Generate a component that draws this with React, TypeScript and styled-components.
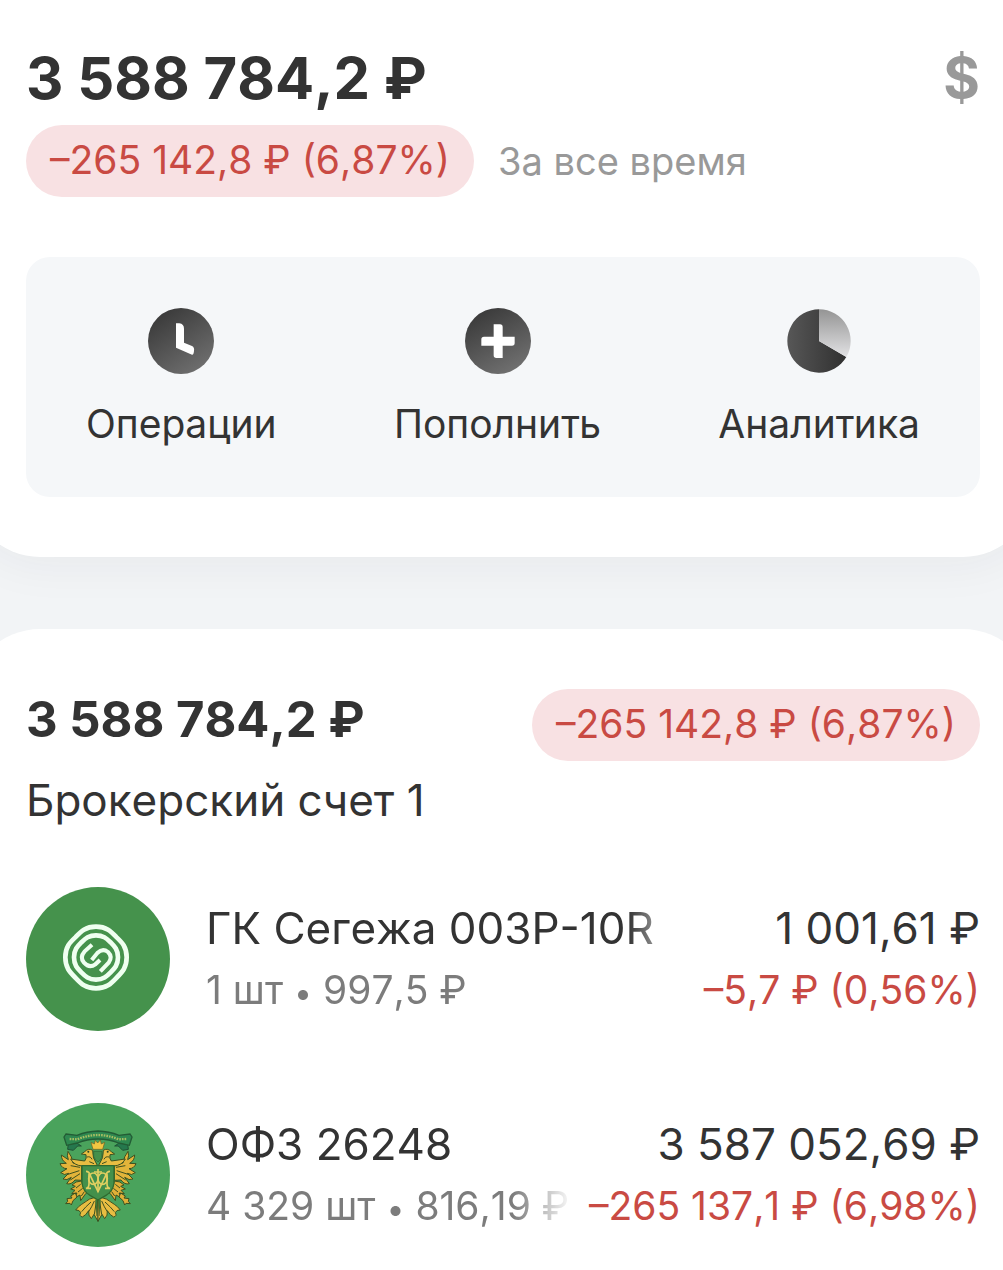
import * as React from "react";
import styled, { createGlobalStyle } from "styled-components";

type TAction = {
  key: string;
  label: string;
  icon: React.ReactNode;
};

type TPosition = {
  name: string;
  amount: string;
  price: string;
  total: string;
  change: string;
  logo: React.ReactNode;
};

const ClockIcon = () => (
  <Icon viewBox="0 0 198 198" aria-hidden="true">
    <defs>
      <linearGradient id="clock-fill" x1="0.2" y1="0.1" x2="0.8" y2="1">
        <stop offset="0" stopColor="#3c3c3c" />
        <stop offset="1" stopColor="#717171" />
      </linearGradient>
    </defs>
    <circle cx="99" cy="99" r="99" fill="url(#clock-fill)" />
    <path
      d="M84 46H94Q108 48 108 62V104L132 114Q140 118 138 129Q137 141 132 140L84 119Z"
      fill="#fff"
    />
  </Icon>
);

const PlusIcon = () => (
  <Icon viewBox="0 0 198 198" aria-hidden="true">
    <defs>
      <linearGradient id="plus-fill" x1="0.2" y1="0.1" x2="0.7" y2="1">
        <stop offset="0" stopColor="#3c3c3c" />
        <stop offset="1" stopColor="#717171" />
      </linearGradient>
    </defs>
    <circle cx="99" cy="99" r="99" fill="url(#plus-fill)" />
    <path
      d="M86 49H105Q113 49 113 57V86H149V105Q149 113 141 113H113V150H94Q86 150 86 142V113H49V94Q49 86 57 86H86Z"
      fill="#fff"
    />
  </Icon>
);

const PieIcon = () => (
  <Icon viewBox="0 0 198 198" aria-hidden="true">
    <defs>
      <linearGradient id="pie-dark" x1="0" y1="0" x2="1" y2="0">
        <stop offset="0" stopColor="#575757" />
        <stop offset="1" stopColor="#303030" />
      </linearGradient>
      <linearGradient id="pie-light" x1="0" y1="0" x2="0" y2="1">
        <stop offset="0" stopColor="#949494" />
        <stop offset="1" stopColor="#e2e2e4" />
      </linearGradient>
    </defs>
    <path d="M99 99V4A95 95 0 1 0 181 147Z" fill="url(#pie-dark)" />
    <path d="M99 99V4A95 95 0 0 1 181 147Z" fill="url(#pie-light)" />
  </Icon>
);

const SegezhaLogo = () => (
  <Logo viewBox="24 21 432 432" aria-hidden="true">
    <circle cx="240" cy="237" r="216" fill="#45924c" />
    <g fill="none" stroke="#effff0" strokeWidth="14">
      <path d="M234 140C266 140 279 154 295 171C312 187 326 200 326 232C326 264 312 277 295 294C279 311 266 325 234 325C202 325 189 311 173 294C156 277 142 264 142 232C142 200 156 187 173 171C189 154 202 140 234 140Z" />
      <path d="M234 166C256 166 266 176 278 187C290 199 300 209 300 232C300 255 290 265 278 277C266 289 256 299 234 299C212 299 202 289 190 277C178 265 168 255 168 232C168 209 178 199 190 187C202 176 212 166 234 166Z" />
      <path
        d="M222 194L200 214Q184 232 198 248Q214 266 232 253L246 240"
        strokeWidth="12"
      />
      <path
        d="M221 240L238 219Q254 203 270 216Q285 231 272 248L247 274"
        strokeWidth="12"
      />
    </g>
  </Logo>
);

// one half of the eagle, the other one is its mirror
const EagleHalf = () => (
  <g stroke="#3d5120" strokeWidth="3" strokeLinejoin="round">
    <path
      d="M191 210L165 204Q162 184 150 169Q146 183 151 194L130 180Q130 196 145 205L126 206Q132 221 147 221L128 233Q139 243 152 235L135 252Q146 258 160 247L146 266Q160 270 171 255L191 256Z"
      fill="#e3b43a"
    />
    <path d="M186 217L158 212M184 227L150 238M186 236L157 255" fill="none" />
    <path
      d="M238 211Q222 188 224 166Q212 158 200 170L190 177L204 179Q207 190 200 198L158 192Q168 211 192 213Z"
      fill="#e8bd42"
    />
    <circle cx="211" cy="170" r="3" fill="#284a24" stroke="none" />
    <path d="M207 186Q218 183 222 193M214 200L228 206" fill="none" />
    <path
      d="M191 258Q172 258 162 270L172 274L158 282L171 286L161 296L177 294L169 309L186 300L188 317L203 296L210 291Q194 280 191 258Z"
      fill="#e0b038"
    />
    <path d="M188 268L174 279M194 280L180 291M199 290L190 303" fill="none" />
    <path
      d="M172 294L158 303L162 309L147 311L149 319L143 326L156 325L160 330L165 317L177 306Z"
      fill="#e0b038"
    />
    <path
      d="M240 304Q213 309 191 328Q181 334 173 345Q185 344 188 353Q182 363 193 366Q204 361 212 347Q210 362 220 371L228 358L240 379Z"
      fill="#e8bd42"
    />
    <path
      d="M235 320L229 358M229 318Q221 337 212 350M219 321Q201 337 191 350"
      fill="none"
    />
    <path d="M232 314L236 363L240 314" fill="#397b38" strokeWidth="1" />
  </g>
);

const EagleLogo = () => (
  <Logo viewBox="24 24 432 432" aria-hidden="true">
    <circle cx="240" cy="240" r="216" fill="#4aa35c" />
    <EagleHalf />
    <g transform="matrix(-1 0 0 1 480 0)">
      <EagleHalf />
    </g>
    <path
      d="M227 169L252 169L251 187Q246 198 240 201Q230 194 227 184Z"
      fill="#43904b"
      stroke="#2d6033"
      strokeWidth="2"
    />
    <path
      d="M225 163L219 142L229 147L232 136L239 144L247 135L250 147L260 142L254 163Z"
      fill="#f2c642"
      stroke="#725c20"
      strokeWidth="2"
    />
    <path
      d="M192 212H288V264Q285 289 264 301L240 315L216 301Q195 289 192 264Z"
      fill="#43904b"
      stroke="#2f6a2f"
      strokeWidth="4"
    />
    <g fill="none" stroke="#e0cf60" strokeWidth="5">
      <path d="M240 222V290M228 231H252" />
      <path d="M204 229Q214 229 217 242L240 290L263 242Q266 229 276 229" />
      <path d="M213 236V266Q213 278 204 280H219M267 236V266Q267 278 276 280H261" />
      <ellipse cx="226" cy="251" rx="14" ry="17" />
      <ellipse cx="254" cy="251" rx="14" ry="17" />
    </g>
    <path
      d="M151 145L149 163L166 166L179 153L190 153L178 145ZM329 145L331 163L314 166L301 153L290 153L302 145Z"
      fill="#25784d"
      stroke="#205235"
      strokeWidth="3"
    />
    <path
      d="M144 117L177 121Q207 109 240 108Q273 109 303 121L336 117L342 126L334 151L302 144Q273 132 240 132Q207 132 178 144L146 151L138 126Z"
      fill="#2e8850"
      stroke="#235c35"
      strokeWidth="4"
    />
    <path
      d="M155 132L178 133Q210 120 240 120Q270 120 302 133L325 132"
      fill="none"
      stroke="#a6bd62"
      strokeWidth="7"
      strokeDasharray="5 3"
    />
  </Logo>
);

const actions: TAction[] = [
  { key: "operations", label: "Операции", icon: <ClockIcon /> },
  { key: "deposit", label: "Пополнить", icon: <PlusIcon /> },
  { key: "analytics", label: "Аналитика", icon: <PieIcon /> }
];

const positions: TPosition[] = [
  {
    name: "ГК Сегежа 003P-10R",
    amount: "1 шт",
    price: "997,5 ₽",
    total: "1 001,61 ₽",
    change: "–5,7 ₽ (0,56%)",
    logo: <SegezhaLogo />
  },
  {
    name: "ОФЗ 26248",
    amount: "4 329 шт",
    price: "816,19 ₽",
    total: "3 587 052,69 ₽",
    change: "–265 137,1 ₽ (6,98%)",
    logo: <EagleLogo />
  }
];

const App: React.FC = () => {
  const renderActions = () => (
    <Actions>
      {actions.map(({ key, label, icon }) => (
        <ActionButton key={key} type="button">
          {icon}
          <span>{label}</span>
        </ActionButton>
      ))}
    </Actions>
  );

  const renderPositions = () => (
    <PositionList>
      {positions.map(({ name, amount, price, total, change, logo }) => (
        <PositionItem key={name}>
          {logo}
          <PositionInfo>
            <PrimaryText>{name}</PrimaryText>
            <SecondaryText $color="#7c7c7c">
              {amount} <Bullet>•</Bullet> {price}
            </SecondaryText>
          </PositionInfo>
          <PositionValue>
            <PrimaryText>{total}</PrimaryText>
            <SecondaryText $color="#c94a43">{change}</SecondaryText>
          </PositionValue>
        </PositionItem>
      ))}
    </PositionList>
  );

  return (
    <Page>
      <GlobalStyle />
      <SummaryCard>
        <TopRow>
          <Total>3 588 784,2 ₽</Total>
          <CurrencyButton type="button" aria-label="Показать в долларах">
            $
          </CurrencyButton>
        </TopRow>
        <PeriodRow>
          <Badge>–265 142,8 ₽ (6,87%)</Badge>
          <Period>За все время</Period>
        </PeriodRow>
        {renderActions()}
      </SummaryCard>
      <AccountCard>
        <AccountHeader>
          <AccountTotal>3 588 784,2 ₽</AccountTotal>
          <Badge>–265 142,8 ₽ (6,87%)</Badge>
        </AccountHeader>
        <AccountName>Брокерский счет 1</AccountName>
        {renderPositions()}
      </AccountCard>
    </Page>
  );
};

export default App;

const GlobalStyle = createGlobalStyle`
  * {
    box-sizing: border-box;
  }
  body {
    margin: 0;
    background: #fff;
    color: #333;
    font-family: Inter, "Liberation Sans", sans-serif;
    font-kerning: none;
  }
  button {
    padding: 0;
    border: 0;
    background: none;
    color: inherit;
    font: inherit;
    cursor: pointer;
  }
`;

const Page = styled.main`
  overflow: hidden;
  background: #f2f4f6;
`;

const Card = styled.section`
  margin: 0 -32px;
  background: #fff;
`;

const SummaryCard = styled(Card)`
  padding: 44px 55px 60px 58px;
  border-radius: 0 0 72px 72px;
  box-shadow: 0 8px 48px rgba(40, 44, 60, 0.05);
`;

const AccountCard = styled(Card)`
  position: relative;
  margin-top: 72px;
  padding: 60px 55px 24px 58px;
  border-radius: 72px 72px 0 0;
`;

const TopRow = styled.div`
  display: flex;
  justify-content: space-between;
  align-items: center;
  height: 68px;
`;

const Total = styled.h1`
  margin: 0;
  font-size: 58px;
  line-height: 66px;
  font-weight: 700;
  white-space: nowrap;
`;

const CurrencyButton = styled.button`
  && {
    color: #999;
    font-size: 56px;
    line-height: 66px;
    font-weight: 700;
  }
`;

const PeriodRow = styled.div`
  display: flex;
  align-items: center;
  gap: 24px;
  margin-top: 13px;
`;

const Badge = styled.span`
  flex: none;
  height: 72px;
  padding: 0 24px;
  border-radius: 36px;
  background: #f8e1e3;
  color: #c94a43;
  font-size: 39px;
  line-height: 70px;
  white-space: nowrap;
`;

const Period = styled.span`
  color: #999;
  font-size: 38px;
  line-height: 70px;
`;

const Actions = styled.nav`
  display: flex;
  justify-content: space-between;
  margin-top: 60px;
  padding: 51px 60px 49px;
  border-radius: 24px;
  background: #f5f7f9;
`;

const ActionButton = styled.button`
  display: flex;
  flex-direction: column;
  align-items: center;
  gap: 26px;
  && {
    font-size: 39px;
    line-height: 48px;
  }
`;

const Icon = styled.svg`
  display: block;
  width: 66px;
  height: 66px;
`;

const Logo = styled.svg`
  display: block;
  flex: none;
  width: 144px;
  height: 144px;
`;

const AccountHeader = styled.header`
  display: flex;
  justify-content: space-between;
`;

const AccountTotal = styled.h2`
  margin: 0;
  font-size: 49px;
  line-height: 62px;
  font-weight: 700;
  white-space: nowrap;
`;

const AccountName = styled.div`
  margin-top: 12px;
  font-size: 44px;
  line-height: 54px;
`;

const PositionList = styled.ul`
  display: flex;
  flex-direction: column;
  gap: 72px;
  margin: 60px 0 0;
  padding: 0;
  list-style: none;
`;

const PositionItem = styled.li`
  display: flex;
  align-items: center;
`;

const PositionInfo = styled.div`
  flex: 1;
  min-width: 0;
  margin: 0 16px 0 36px;
  overflow: hidden;
  mask-image: linear-gradient(to left, transparent, #000 60px);
`;

const PositionValue = styled.div`
  flex: none;
  text-align: right;
`;

const PrimaryText = styled.div`
  font-size: 44px;
  line-height: 62px;
  white-space: nowrap;
`;

const SecondaryText = styled.div<{ $color: string }>`
  color: ${({ $color }) => $color};
  font-size: 39px;
  line-height: 62px;
  white-space: nowrap;
`;

const Bullet = styled.span`
  font-size: 32px;
  line-height: 1;
`;
